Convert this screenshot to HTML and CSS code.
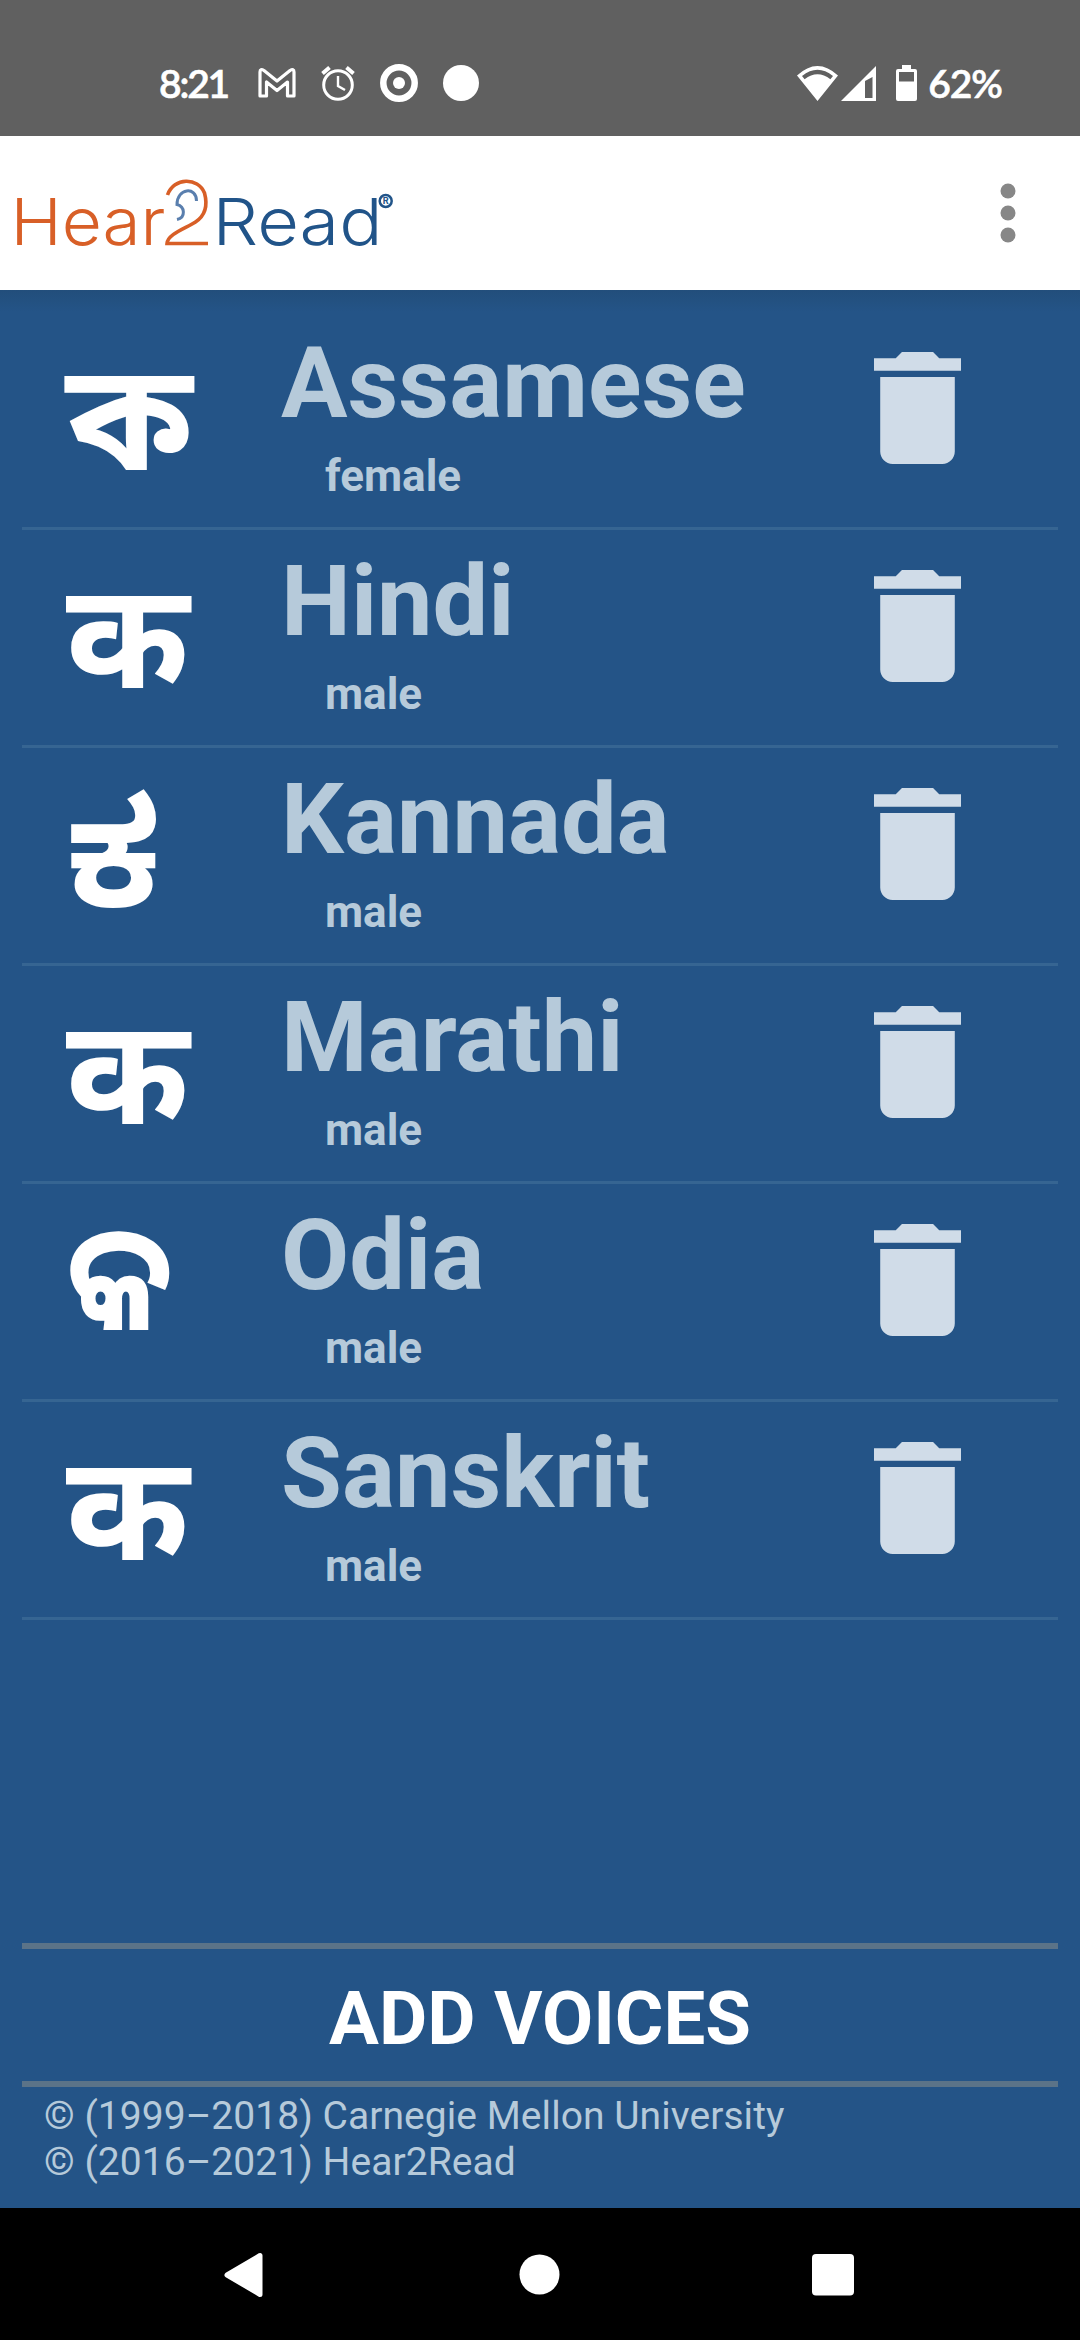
FILE: index.html
```html
<!DOCTYPE html>
<html lang="en"><head><meta charset="utf-8"><title>Hear2Read</title><link rel="stylesheet" href="styles.css"></head>
<body>
<header class="status">
  <div class="status-left">
    <span class="clock">8:21</span>
    <svg class="ic-mail" width="38" height="30" viewBox="0 0 38 30"><path d="M2 28V4q0-4 4-1.500L19 13 32 2.500q4-2.500 4 1.500v24h-6.500V14L19 22.500 8.500 14v14z" fill="none" stroke="#fff" stroke-width="3.200" stroke-linejoin="round"/></svg>
    <svg class="ic-alarm" width="34" height="36" viewBox="0 0 34 36"><g fill="none" stroke="#fff"><circle cx="17" cy="20" r="14.300" stroke-width="3"/><path d="M17 11v10l7 4" stroke-width="2.400"/><path d="M1.500 8.500l7-6M32.500 8.500l-7-6" stroke-width="4"/></g></svg>
    <svg class="ic-target" width="38" height="38" viewBox="0 0 38 38"><circle cx="19" cy="19" r="15.700" fill="none" stroke="#fff" stroke-width="6.500"/><circle cx="19" cy="19" r="6" fill="#fff"/></svg>
    <svg class="ic-dot" width="36" height="36" viewBox="0 0 36 36"><circle cx="18" cy="18" r="18" fill="#fff"/></svg>
  </div>
  <div class="status-right">
    <svg width="41" height="35" viewBox="0 0 41 35"><path fill="#fff" fill-rule="evenodd" d="M20.500 35L0 9.500Q20.500-9.500 41 9.500zM5 10l2.600 3.200Q20.500 3.500 33.400 13.200L36 10Q20.500-2.500 5 10z"/></svg>
    <svg class="ic-signal" width="35" height="35" viewBox="0 0 35 35"><path fill="#fff" fill-rule="evenodd" d="M35 0v35H0zM24 15v17h7.500V11z"/></svg>
    <svg class="ic-battery" width="21" height="36" viewBox="0 0 21 36"><path fill="#fff" fill-rule="evenodd" d="M6 0h9v4h4q2 0 2 2v28q0 2-2 2H2q-2 0-2-2V6q0-2 2-2h4zM3 7v9.500h15V7z"/></svg>
    <span class="percent">62%</span>
  </div>
</header>
<div class="toolbar">
  <svg class="logo" width="400" height="154" viewBox="0 0 400 154">
    <text class="logo-text logo-orange" x="10.500" y="109" textLength="155" lengthAdjust="spacingAndGlyphs">Hear</text>
    <path d="M167.500 59C174 41 198 41 204.500 57c3.500 13 0 23-9 29-10 6.500-28 12-28.500 21.500H208" fill="none" stroke="#d85f27" stroke-width="3.600"/>
    <path d="M196.500 65c0-15-19.500-13-19.500 3.500 8 2 9 13 0 15" fill="none" stroke="#5a7fae" stroke-width="3"/>
    <text class="logo-text logo-blue" x="212.500" y="109" textLength="170" lengthAdjust="spacingAndGlyphs">Read</text>
    <circle cx="385.700" cy="65" r="6" fill="#fff" stroke="#215489" stroke-width="2.500"/>
    <text class="logo-mark" x="385.700" y="68.400">R</text>
  </svg>
  <svg class="more" width="16" height="60" viewBox="0 0 16 60"><g fill="#878787"><circle cx="8" cy="8" r="7.500"/><circle cx="8" cy="30" r="7.500"/><circle cx="8" cy="52" r="7.500"/></g></svg>
</div>
<main class="content">
  <ul class="voices">
    <li class="voice"><svg class="glyph bengali" viewBox="0 0 160 215"><text transform="translate(44 158) scale(1.050 1)">ক</text></svg><div class="label"><div class="name">Assamese</div><div class="gender">female</div></div><svg class="trash" viewBox="5 3 14 18"><path d="M6 19c0 1.100.9 2 2 2h8c1.100 0 2-.9 2-2V7H6zM19 4h-3.500l-1-1h-5l-1 1H5v2h14z"/></svg></li>
    <li class="voice"><svg class="glyph deva" viewBox="0 0 160 215"><text x="44" y="158">क</text></svg><div class="label"><div class="name">Hindi</div><div class="gender">male</div></div><svg class="trash" viewBox="5 3 14 18"><path d="M6 19c0 1.100.9 2 2 2h8c1.100 0 2-.9 2-2V7H6zM19 4h-3.500l-1-1h-5l-1 1H5v2h14z"/></svg></li>
    <li class="voice"><svg class="glyph kannada" viewBox="0 0 160 215"><text x="44" y="158">ಕ</text></svg><div class="label"><div class="name">Kannada</div><div class="gender">male</div></div><svg class="trash" viewBox="5 3 14 18"><path d="M6 19c0 1.100.9 2 2 2h8c1.100 0 2-.9 2-2V7H6zM19 4h-3.500l-1-1h-5l-1 1H5v2h14z"/></svg></li>
    <li class="voice"><svg class="glyph deva" viewBox="0 0 160 215"><text x="44" y="158">क</text></svg><div class="label"><div class="name">Marathi</div><div class="gender">male</div></div><svg class="trash" viewBox="5 3 14 18"><path d="M6 19c0 1.100.9 2 2 2h8c1.100 0 2-.9 2-2V7H6zM19 4h-3.500l-1-1h-5l-1 1H5v2h14z"/></svg></li>
    <li class="voice"><svg class="glyph odia" viewBox="0 0 160 215"><text transform="translate(45 146) scale(.895 1)">କ</text></svg><div class="label"><div class="name">Odia</div><div class="gender">male</div></div><svg class="trash" viewBox="5 3 14 18"><path d="M6 19c0 1.100.9 2 2 2h8c1.100 0 2-.9 2-2V7H6zM19 4h-3.500l-1-1h-5l-1 1H5v2h14z"/></svg></li>
    <li class="voice"><svg class="glyph deva" viewBox="0 0 160 215"><text x="44" y="158">क</text></svg><div class="label"><div class="name">Sanskrit</div><div class="gender">male</div></div><svg class="trash" viewBox="5 3 14 18"><path d="M6 19c0 1.100.9 2 2 2h8c1.100 0 2-.9 2-2V7H6zM19 4h-3.500l-1-1h-5l-1 1H5v2h14z"/></svg></li>
  </ul>
  <button class="add">ADD VOICES</button>
  <footer class="legal"><div>© (1999–2018) Carnegie Mellon University</div><div>© (2016–2021) Hear2Read</div></footer>
</main>
<nav class="nav">
  <svg width="40" height="46" viewBox="0 0 40 46"><path d="M36 3.500v39L3 23z" fill="#fff" stroke="#fff" stroke-width="5" stroke-linejoin="round"/></svg>
  <svg width="40" height="46" viewBox="0 0 40 46"><circle cx="21.500" cy="22.500" r="20" fill="#fff"/></svg>
  <svg width="42" height="46" viewBox="0 0 42 46"><rect y="2" width="42" height="41.500" rx="4" fill="#fff"/></svg>
</nav>
</body></html>
```
FILE: styles.css
```css
* { box-sizing: border-box; }
body { margin: 0; width: 1080px; height: 2340px; display: flex; flex-direction: column; font-family: Roboto, sans-serif; background: #245487; overflow: hidden; }
svg { display: block; flex: none; overflow: visible; }
.status { height: 136px; background: #606060; color: #fff; display: flex; justify-content: space-between; padding: 30px 78px 0 159px; font: 600 39px/1 Lato, sans-serif; }
.status-left, .status-right { display: flex; align-items: center; height: 106px; }
.toolbar { height: 154px; background: #fff; display: flex; justify-content: space-between; align-items: center; padding-right: 64px; }
.logo-text { font: 300 65px Inter, sans-serif; }
.logo-orange { fill: #d85f27; }
.logo-blue { fill: #215489; }
.logo-mark { font: 700 9px Inter, sans-serif; fill: #215489; text-anchor: middle; }
.content { flex: 1; display: flex; flex-direction: column; padding: 22px 22px 0; background: linear-gradient(#224e7b, #245487 22px); }
.voices { list-style: none; margin: 0; padding: 0; }
.voice { height: 218px; border-bottom: 3px solid #366592; display: flex; align-items: flex-start; }
.glyph { width: 160px; height: 215px; fill: #fff; }
.glyph text { font-size: 148.5px; font-weight: 700; }
.bengali text { font-family: "Noto Sans Bengali", "Noto Sans", sans-serif; }
.deva text { font-family: "Noto Sans Devanagari", "Noto Sans", sans-serif; }
.kannada text { font-family: "Noto Sans Kannada", "Noto Sans", sans-serif; }
.odia text { font-family: "Noto Sans Oriya", "Noto Sans", sans-serif; }
.label { flex: 1; padding: 13px 0 0 99px; color: #b6cada; font-weight: 700; }
.name { font-size: 99px; line-height: 116px; }
.gender { font-size: 44px; line-height: 52px; margin-top: 9px; padding-left: 44px; }
.trash { width: 87px; height: 112px; margin: 40px 97px 0 0; fill: #d0dce8; }
.add { margin: 323px 0 0; height: 144px; border: solid #5b7388; border-width: 6px 0; padding: 8px 0 0; background: none; color: #fff; font: 700 74.25px/1 Roboto, sans-serif; }
.legal { padding: 6px 23px 0 22px; font-size: 39px; letter-spacing: 0.05px; line-height: 46px; color: #b6cada; }
.nav { height: 132px; background: #000; display: flex; justify-content: space-between; padding: 44px 226px 0 224px; }
.clock { width: 99px; letter-spacing: -2.2px; -webkit-text-stroke: 0.6px #fff; }
.ic-alarm { margin-left: 25px; }
.ic-target { margin-left: 25px; }
.ic-dot { margin-left: 25px; }
.ic-signal { margin-left: 3px; }
.ic-battery { margin-left: 20px; }
.percent { margin-left: 11px; letter-spacing: -1px; -webkit-text-stroke: 0.6px #fff; }
```
